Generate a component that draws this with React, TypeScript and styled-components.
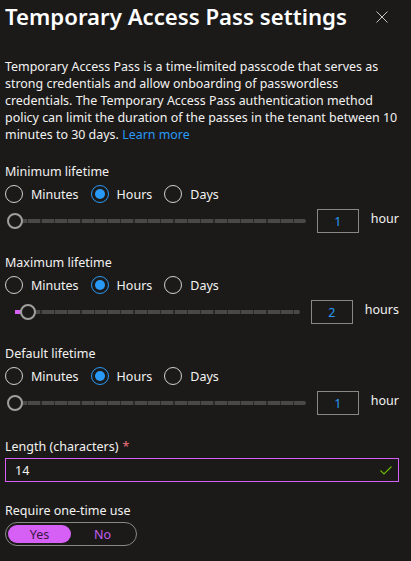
import React from "react";
import styled, { createGlobalStyle } from "styled-components";

const Global = createGlobalStyle`
  html, body { margin: 0; padding: 0; background: #1b1a19; }
  body { font-family: "Noto Sans", "Open Sans", sans-serif; color: #f3f2f1; }
  * { box-sizing: border-box; }
`;

const Panel = styled.div`
  width: 411px;
  height: 561px;
  overflow: hidden;
  padding: 0 12px 0 5px;
  background: #1b1a19;
`;

const Header = styled.div`
  display: flex;
  align-items: center;
  justify-content: space-between;
  height: 34px;
  padding-right: 11px;
`;

const Title = styled.h1`
  margin: 0;
  font-size: 22.2px;
  font-weight: 600;
  line-height: 32px;
  color: #ffffff;
`;

const CloseButton = styled.button`
  background: none;
  border: none;
  padding: 0;
  width: 12px;
  height: 12px;
  display: flex;
  margin-top: -1px;
`;

const Description = styled.p`
  margin: 24px 0 0;
  font-size: 12.45px;
  line-height: 17px;
  white-space: nowrap;
  color: #f3f2f1;
`;

const Link = styled.a`
  color: #2899f5;
  text-decoration: none;
`;

const Section = styled.div<{ $top: number }>`
  margin-top: ${(p) => p.$top}px;
  display: flex;
  flex-direction: column;
`;

const Label = styled.div`
  font-size: 12.5px;
  line-height: 20px;
  height: 20px;
  color: #f3f2f1;
`;

const Required = styled.span`
  color: #f1707b;
  margin-left: 4px;
`;

const RadioRow = styled.div`
  display: flex;
  align-items: center;
  height: 22px;
  margin-top: 1px;
`;

const RadioItem = styled.label`
  display: flex;
  align-items: center;
  gap: 8px;
  margin-right: 12px;
  font-size: 12.5px;
  color: #f3f2f1;
`;

const RadioCircle = styled.span<{ $checked: boolean }>`
  width: 18px;
  height: 18px;
  border-radius: 50%;
  border: 1px solid ${(p) => (p.$checked ? "#2899f5" : "#d2d0ce")};
  display: flex;
  align-items: center;
  justify-content: center;
  &::after {
    content: "";
    width: 10px;
    height: 10px;
    border-radius: 50%;
    background: #2899f5;
    display: ${(p) => (p.$checked ? "block" : "none")};
  }
`;

const SliderRow = styled.div`
  display: flex;
  align-items: center;
  height: 24px;
  margin-top: 4px;
`;

const Track = styled.div`
  position: relative;
  flex: 1;
  height: 16px;
  margin-left: 2px;
  margin-right: 11px;
  &::before {
    content: "";
    position: absolute;
    left: 8px;
    right: 0;
    top: 6px;
    height: 4px;
    background: repeating-linear-gradient(
      to right,
      #4a4846 0px,
      #4a4846 12px,
      #2b2a29 12px,
      #2b2a29 13.3px
    );
    border-radius: 2px;
  }
`;

const Fill = styled.div`
  position: absolute;
  left: 8px;
  top: 6px;
  height: 4px;
  background: #d660f5;
`;

const Thumb = styled.div`
  position: absolute;
  top: 0;
  width: 16px;
  height: 16px;
  border-radius: 50%;
  border: 2px solid #a19f9d;
  background: #1b1a19;
`;

const NumberBox = styled.div`
  width: 42px;
  height: 24px;
  border: 1px solid #8a8886;
  display: flex;
  align-items: center;
  justify-content: center;
  font-size: 12.5px;
  color: #2899f5;
  padding-top: 1px;
`;

const Unit = styled.span`
  font-size: 12.5px;
  color: #f3f2f1;
  margin-left: 12px;
  margin-top: -5px;
`;

const TextInput = styled.div`
  margin-top: 1px;
  height: 24px;
  border: 1px solid #d660f5;
  display: flex;
  align-items: center;
  justify-content: space-between;
  padding: 0 6px 0 9px;
  font-size: 12.5px;
  color: #f3f2f1;
`;

const Toggle = styled.div`
  margin-top: 1px;
  width: 132px;
  height: 24px;
  border: 1px solid #8a8886;
  border-radius: 12px;
  padding: 2px;
  display: grid;
  grid-template-columns: 63px 1fr;
`;

const ToggleOption = styled.span<{ $active: boolean }>`
  display: flex;
  align-items: center;
  justify-content: center;
  border-radius: 9px;
  font-size: 12.5px;
  background: ${(p) => (p.$active ? "#d660f5" : "transparent")};
  color: ${(p) => (p.$active ? "#3a1748" : "#c35ef0")};
`;

type SliderProps = { value: number; unit: string; offset: number };

const LifetimeSlider = ({ value, unit, offset }: SliderProps) => (
  <SliderRow>
    <Track>
      {offset > 0 && <Fill style={{ width: offset }} />}
      <Thumb style={{ left: offset }} />
    </Track>
    <NumberBox>{value}</NumberBox>
    <Unit>{unit}</Unit>
  </SliderRow>
);

const Radio = ({ label, checked }: { label: string; checked: boolean }) => (
  <RadioItem>
    <RadioCircle $checked={checked} />
    {label}
  </RadioItem>
);

const Lifetime = ({
  title,
  value,
  unit,
  offset,
  top,
}: {
  title: string;
  value: number;
  unit: string;
  offset: number;
  top: number;
}) => (
  <Section $top={top}>
    <Label>{title}</Label>
    <RadioRow>
      <Radio label="Minutes" checked={false} />
      <Radio label="Hours" checked />
      <Radio label="Days" checked={false} />
    </RadioRow>
    <LifetimeSlider value={value} unit={unit} offset={offset} />
  </Section>
);

export default function App() {
  return (
    <>
      <Global />
      <Panel>
        <Header>
          <Title>Temporary Access Pass settings</Title>
          <CloseButton aria-label="Close">
            <svg width="12" height="12" viewBox="0 0 12 12">
              <path d="M0.5 0.5 L11.5 11.5 M11.5 0.5 L0.5 11.5" stroke="#c8c6c4" strokeWidth="1" />
            </svg>
          </CloseButton>
        </Header>
        <Description>
          Temporary Access Pass is a time-limited passcode that serves as
          <br />
          strong credentials and allow onboarding of passwordless
          <br />
          credentials. The Temporary Access Pass authentication method
          <br />
          policy can limit the duration of the passes in the tenant between 10
          <br />
          minutes to 30 days. <Link href="#">Learn more</Link>
        </Description>
        <Lifetime title="Minimum lifetime" value={1} unit="hour" offset={0} top={19} />
        <Lifetime title="Maximum lifetime" value={2} unit="hours" offset={13} top={20} />
        <Lifetime title="Default lifetime" value={1} unit="hour" offset={0} top={20} />
        <Section $top={22}>
          <Label>
            Length (characters)<Required>*</Required>
          </Label>
          <TextInput>
            <span>14</span>
            <svg width="12" height="9" viewBox="0 0 12 9">
              <path d="M0.5 4.5 L4 8 L11.5 0.5" stroke="#6bb700" strokeWidth="1.2" fill="none" />
            </svg>
          </TextInput>
        </Section>
        <Section $top={19}>
          <Label>Require one-time use</Label>
          <Toggle>
            <ToggleOption $active>Yes</ToggleOption>
            <ToggleOption $active={false}>No</ToggleOption>
          </Toggle>
        </Section>
      </Panel>
    </>
  );
}
